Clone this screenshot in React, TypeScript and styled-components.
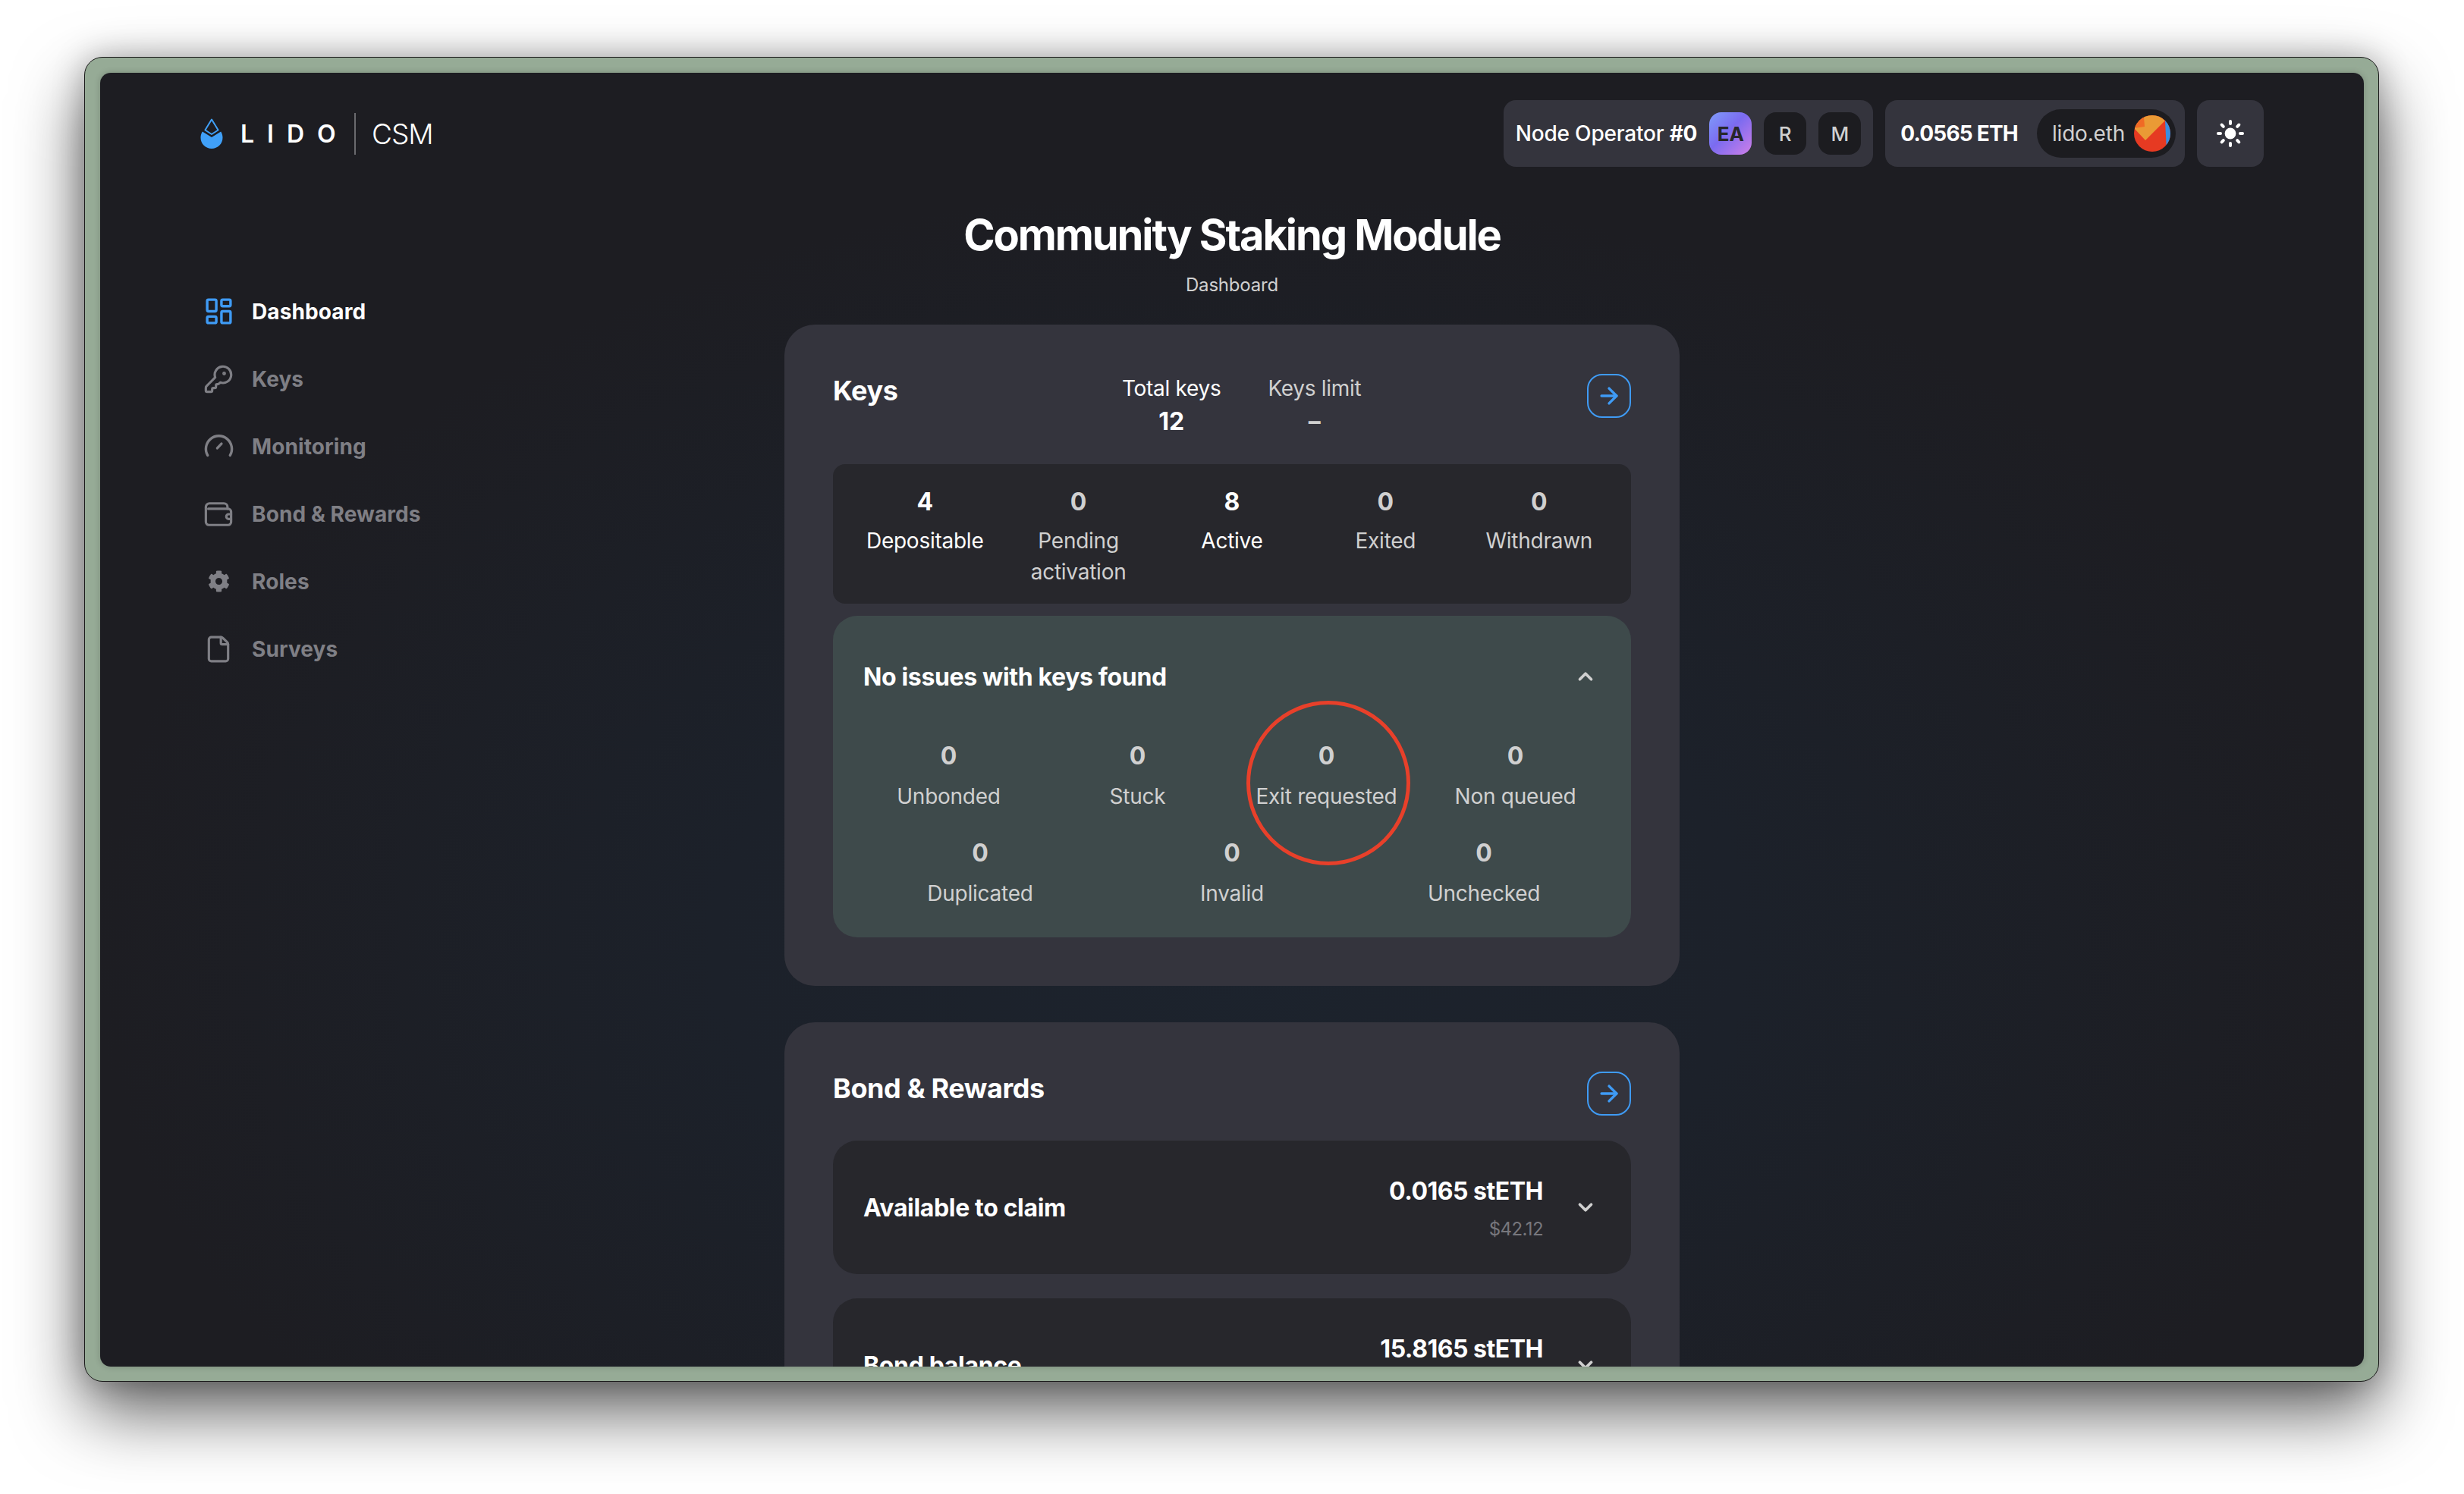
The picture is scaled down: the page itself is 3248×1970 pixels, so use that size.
import React from 'react';
import styled, { createGlobalStyle } from 'styled-components';
import { ArrowRight, ChevronDown, ChevronUp, File, KeyRound, LayoutDashboard } from 'lucide-react';
import { FaCog } from 'react-icons/fa';

const FONT = `Inter, 'Noto Sans', sans-serif`;

const NAV = ['Dashboard', 'Keys', 'Monitoring', 'Bond & Rewards', 'Roles', 'Surveys'];

const KEY_STATS = [
  { value: 4, label: 'Depositable', bright: true },
  { value: 0, label: 'Pending activation' },
  { value: 8, label: 'Active', bright: true },
  { value: 0, label: 'Exited' },
  { value: 0, label: 'Withdrawn' },
];

const ISSUES = [
  { label: 'Unbonded', span: 3 },
  { label: 'Stuck', span: 3 },
  { label: 'Exit requested', span: 3 },
  { label: 'Non queued', span: 3 },
  { label: 'Duplicated', span: 4 },
  { label: 'Invalid', span: 4 },
  { label: 'Unchecked', span: 4 },
];

function GaugeIcon() {
  return (
    <svg width="41" height="41" viewBox="0 0 24 24" fill="none" stroke="currentColor" strokeWidth="2" strokeLinecap="round">
      <path d="M3.34 19a10 10 0 1 1 17.32 0" />
      <path d="M10.8 13.4L14 10" />
    </svg>
  );
}

function WalletIcon() {
  return (
    <svg width="38" height="38" viewBox="0 0 24 24" fill="none" stroke="currentColor" strokeWidth="2" strokeLinejoin="round" strokeLinecap="round">
      <path d="M1.5 6a3 3 0 0 1 3-3h12a3 3 0 0 1 3 3v1.5" />
      <path d="M1.5 6v12.5A2.5 2.5 0 0 0 4 21h16a2.5 2.5 0 0 0 2.5-2.5V10A2.5 2.5 0 0 0 20 7.5H3.5" />
      <path d="M22.5 12h-2a2 2 0 0 0 0 4h2" />
    </svg>
  );
}

function SunIcon() {
  return (
    <svg width="40" height="40" viewBox="0 0 40 40" fill="#fff">
      <circle cx="20" cy="20" r="7.4" />
      {[0, 45, 90, 135, 180, 225, 270, 315].map((a) => (
        <rect key={a} x="18" y="2" width="4" height="7" rx="2" transform={`rotate(${a} 20 20)`} />
      ))}
    </svg>
  );
}

function DropLogo() {
  return (
    <svg width="30" height="41" viewBox="0 0 30 41">
      <path d="M15 1.5L23.6 15.5L15 21L6.4 15.5Z" fill="none" stroke="#40a0f8" strokeWidth="2" strokeLinejoin="round" />
      <path d="M2.8 17.5L15 25L27.2 17.5C28.6 19.7 29.5 22.4 29.5 25.5C29.5 33.6 23 40 15 40C7 40 0.5 33.6 0.5 25.5C0.5 22.4 1.4 19.7 2.8 17.5Z" fill="#40a0f8" />
    </svg>
  );
}

function EnsAvatar() {
  return (
    <svg width="48" height="48" viewBox="0 0 48 48">
      <defs>
        <clipPath id="avatar-round">
          <circle cx="24" cy="24" r="24" />
        </clipPath>
      </defs>
      <g clipPath="url(#avatar-round)">
        <rect width="48" height="48" fill="#e63a22" />
        <path d="M41 7L43 48H48V0H41Z" fill="#3a8ee0" />
        <path d="M0 17L15 33L41 7L30 -2H0Z" fill="#ea9a35" />
        <path d="M0 17L14 15L13 2L0 8Z" fill="#f06a25" />
      </g>
    </svg>
  );
}

function navIcon(name: string) {
  switch (name) {
    case 'Dashboard':
      return <LayoutDashboard size={41} strokeWidth={2} />;
    case 'Keys':
      return <KeyRound size={40} strokeWidth={1.9} />;
    case 'Monitoring':
      return <GaugeIcon />;
    case 'Bond & Rewards':
      return <WalletIcon />;
    case 'Roles':
      return <FaCog size={29} />;
    default:
      return <File size={38} strokeWidth={2} />;
  }
}

function LinkButton() {
  return (
    <ArrowLink>
      <ArrowRight size={34} strokeWidth={2.4} />
    </ArrowLink>
  );
}

function App() {
  return (
    <>
      <GlobalStyle />
      <Page>
        <Frame>
          <Screen>
            <Header>
              <Logo>
                <DropLogo />
                <LogoWord>LIDO</LogoWord>
                <LogoDivider />
                <LogoProduct>CSM</LogoProduct>
              </Logo>
              <HeaderRight>
                <HeaderPill>
                  <OperatorName>
                    Node Operator <b>#0</b>
                  </OperatorName>
                  <RoleChip $active>EA</RoleChip>
                  <RoleChip>R</RoleChip>
                  <RoleChip>M</RoleChip>
                </HeaderPill>
                <HeaderPill>
                  <Balance>0.0565 ETH</Balance>
                  <AddressPill>
                    <span>lido.eth</span>
                    <EnsAvatar />
                  </AddressPill>
                </HeaderPill>
                <ThemeButton>
                  <SunIcon />
                </ThemeButton>
              </HeaderRight>
            </Header>
            <Body>
              <Nav>
                {NAV.map((name, i) => (
                  <NavItem key={name} $active={i === 0}>
                    <NavIcon>{navIcon(name)}</NavIcon>
                    {name}
                  </NavItem>
                ))}
              </Nav>
              <Main>
                <Title>Community Staking Module</Title>
                <Subtitle>Dashboard</Subtitle>
                <Card>
                  <KeysHeader>
                    <CardTitle $basis="381px">Keys</CardTitle>
                    <TotalsGroup>
                      <Total>
                        <TotalLabel $bright>Total keys</TotalLabel>
                        <TotalValue>12</TotalValue>
                      </Total>
                      <Total>
                        <TotalLabel>Keys limit</TotalLabel>
                        <TotalValue $dim>–</TotalValue>
                      </Total>
                    </TotalsGroup>
                    <LinkButton />
                  </KeysHeader>
                  <StatsBox>
                    {KEY_STATS.map((s) => (
                      <StatItem key={s.label} $bright={s.bright}>
                        <StatValue>{s.value}</StatValue>
                        <StatLabel>{s.label}</StatLabel>
                      </StatItem>
                    ))}
                  </StatsBox>
                  <IssuesBox>
                    <IssuesHeader>
                      <RowTitle>No issues with keys found</RowTitle>
                      <Chevron>
                        <ChevronUp size={30} strokeWidth={3} />
                      </Chevron>
                    </IssuesHeader>
                    <IssuesGrid>
                      {ISSUES.map((s) => (
                        <IssueItem key={s.label} $span={s.span}>
                          <StatValue>0</StatValue>
                          <StatLabel>{s.label}</StatLabel>
                          {s.label === 'Exit requested' && <RedCircle />}
                        </IssueItem>
                      ))}
                    </IssuesGrid>
                  </IssuesBox>
                </Card>
                <BondCard>
                  <BondHeader>
                    <CardTitle>Bond &amp; Rewards</CardTitle>
                    <LinkButton />
                  </BondHeader>
                  <BondRow>
                    <RowTitle>Available to claim</RowTitle>
                    <Amount>
                      <AmountValue>0.0165 stETH</AmountValue>
                      <AmountFiat>$42.12</AmountFiat>
                    </Amount>
                    <Chevron>
                      <ChevronDown size={30} strokeWidth={3} />
                    </Chevron>
                  </BondRow>
                  <BondRow>
                    <RowTitle>Bond balance</RowTitle>
                    <Amount>
                      <AmountValue>15.8165 stETH</AmountValue>
                      <AmountFiat>$40 412.12</AmountFiat>
                    </Amount>
                    <Chevron>
                      <ChevronDown size={30} strokeWidth={3} />
                    </Chevron>
                  </BondRow>
                </BondCard>
              </Main>
            </Body>
          </Screen>
        </Frame>
      </Page>
    </>
  );
}

const GlobalStyle = createGlobalStyle`
  html, body {
    margin: 0;
    padding: 0;
    background: #fff;
  }
  * {
    box-sizing: border-box;
  }
`;

const Page = styled.div`
  width: 3248px;
  height: 1970px;
  padding: 75px 0 0 111px;
  background: #fff;
  overflow: hidden;
  font-family: ${FONT};
`;

const Frame = styled.div`
  width: 3025px;
  height: 1747px;
  padding: 20px;
  background: #96ab96;
  border: 1px solid #1a1a1a;
  border-radius: 24px;
  box-shadow: 0 40px 90px rgba(0, 0, 0, 0.62), 0 0 40px rgba(0, 0, 0, 0.25);
`;

const Screen = styled.div`
  width: 2984px;
  height: 1706px;
  overflow: hidden;
  border-radius: 14px;
  background: radial-gradient(ellipse 1500px 1000px at 1490px 1150px, #1c232d 0%, #1c212a 45%, #1d1d22 100%);
  box-shadow: 0 0 8px rgba(0, 0, 0, 0.2);
`;

const Header = styled.header`
  display: flex;
  align-items: center;
  justify-content: space-between;
  padding: 36px 132px 0;
`;

const Logo = styled.div`
  display: flex;
  align-items: center;
`;

const LogoWord = styled.span`
  margin-left: 23px;
  width: 150px;
  font-size: 32px;
  font-weight: 600;
  letter-spacing: 17px;
  color: #fff;
`;

const LogoDivider = styled.span`
  width: 2px;
  height: 55px;
  background: #6a6a6e;
`;

const LogoProduct = styled.span`
  margin-left: 21px;
  font-size: 37px;
  font-weight: 300;
  letter-spacing: -1px;
  color: #fff;
`;

const HeaderRight = styled.div`
  display: flex;
  gap: 16px;
`;

const HeaderPill = styled.div`
  display: flex;
  align-items: center;
  gap: 16px;
  height: 88px;
  padding: 0 16px;
  background: #34343d;
  border-radius: 16px;
`;

const OperatorName = styled.span`
  font-size: 28px;
  font-weight: 500;
  letter-spacing: -0.2px;
  color: #fff;
  white-space: nowrap;

  b {
    font-weight: 700;
  }
`;

const RoleChip = styled.span<{ $active?: boolean }>`
  display: flex;
  align-items: center;
  justify-content: center;
  width: 56px;
  height: 56px;
  border-radius: 16px;
  font-size: 26px;
  font-weight: ${(p) => (p.$active ? 700 : 500)};
  color: ${(p) => (p.$active ? '#27272c' : '#d0d0d0')};
  background: ${(p) => (p.$active ? 'linear-gradient(135deg, #7f9cf9 0%, #7b6bf0 45%, #cf7fe8 100%)' : '#1c1c20')};
`;

const Balance = styled.span`
  margin: 0 9px 0 4px;
  font-size: 28px;
  font-weight: 700;
  letter-spacing: -0.8px;
  color: #fff;
  white-space: nowrap;
`;

const AddressPill = styled.div`
  display: flex;
  align-items: center;
  gap: 12px;
  height: 64px;
  margin-right: -4px;
  padding: 0 7px 0 20px;
  border-radius: 32px;
  background: #1c1c20;
  font-size: 28px;
  font-weight: 400;
  letter-spacing: -0.2px;
  color: #d0d0d0;
`;

const ThemeButton = styled.div`
  display: flex;
  align-items: center;
  justify-content: center;
  width: 88px;
  height: 88px;
  border-radius: 16px;
  background: #34343d;
`;

const Body = styled.div`
  display: grid;
  grid-template-columns: 902px 1180px;
`;

const Nav = styled.nav`
  display: flex;
  flex-direction: column;
  padding: 146px 0 0 132px;
`;

const NavItem = styled.div<{ $active?: boolean }>`
  display: flex;
  align-items: center;
  height: 89px;
  font-size: 28px;
  font-weight: 700;
  letter-spacing: 0.1px;
  color: ${(p) => (p.$active ? '#fff' : '#7f7f85')};

  svg {
    color: ${(p) => (p.$active ? '#3f9bf5' : '#7f7f85')};
  }
`;

const NavIcon = styled.span`
  display: flex;
  align-items: center;
  justify-content: center;
  width: 48px;
  margin-right: 20px;
`;

const Main = styled.main`
  display: flex;
  flex-direction: column;
`;

const Title = styled.h1`
  margin: 54px 0 0;
  font-size: 56px;
  line-height: 72px;
  font-weight: 700;
  letter-spacing: -2.1px;
  text-align: center;
  color: #fff;
`;

const Subtitle = styled.div`
  margin-top: 12px;
  font-size: 24px;
  line-height: 36px;
  font-weight: 400;
  letter-spacing: -0.2px;
  text-align: center;
  color: #d0d0d0;
`;

const Card = styled.section`
  margin-top: 34px;
  height: 872px;
  padding: 62px 62px 0 64px;
  background: #34343d;
  border-radius: 40px;
`;

const BondCard = styled(Card)`
  margin-top: 48px;
  height: auto;
  padding-top: 62px;
`;

const KeysHeader = styled.div`
  display: flex;
  align-items: flex-start;
  height: 122px;
`;

const BondHeader = styled.div`
  display: flex;
  align-items: flex-start;
  justify-content: space-between;
  height: 94px;
`;

const CardTitle = styled.h2<{ $basis?: string }>`
  flex: ${(p) => (p.$basis ? `0 0 ${p.$basis}` : '0 1 auto')};
  margin: 0;
  font-size: 36px;
  line-height: 50px;
  font-weight: 700;
  letter-spacing: -0.4px;
  color: #fff;
`;

const TotalsGroup = styled.div`
  display: flex;
  gap: 62px;
`;

const Total = styled.div`
  display: flex;
  flex-direction: column;
  align-items: center;
`;

const TotalLabel = styled.span<{ $bright?: boolean }>`
  font-size: 28px;
  line-height: 44px;
  font-weight: 400;
  letter-spacing: -0.3px;
  color: ${(p) => (p.$bright ? '#fff' : '#d0d0d0')};
`;

const TotalValue = styled.span<{ $dim?: boolean }>`
  font-size: 32px;
  line-height: 44px;
  font-weight: 700;
  color: ${(p) => (p.$dim ? '#d0d0d0' : '#fff')};
`;

const ArrowLink = styled.span`
  display: flex;
  align-items: center;
  justify-content: center;
  flex: 0 0 58px;
  width: 58px;
  height: 58px;
  margin: 3px 2px 0 auto;
  border: 2px solid #3f9bf5;
  border-radius: 20px;
  color: #3f9bf5;
`;

const StatsBox = styled.div`
  display: grid;
  grid-template-columns: repeat(5, 1fr);
  width: 1052px;
  height: 184px;
  margin-top: 0;
  padding: 28px 20px 0;
  background: #27272c;
  border-radius: 16px;
`;

const StatItem = styled.div<{ $bright?: boolean }>`
  display: flex;
  flex-direction: column;
  align-items: center;
  padding: 0 20px;
  text-align: center;
  color: ${(p) => (p.$bright ? '#fff' : '#d0d0d0')};
`;

const StatValue = styled.div`
  font-size: 32px;
  line-height: 44px;
  font-weight: 700;
`;

const StatLabel = styled.div`
  margin-top: 9px;
  font-size: 28px;
  line-height: 41px;
  font-weight: 400;
  letter-spacing: -0.25px;
`;

const IssuesBox = styled.div`
  width: 1052px;
  height: 424px;
  margin-top: 16px;
  padding: 0 40px;
  background: #3e4a4b;
  border-radius: 32px;
`;

const IssuesHeader = styled.div`
  display: flex;
  align-items: center;
  justify-content: space-between;
  height: 160px;
  padding-top: 0;
`;

const RowTitle = styled.div`
  font-size: 32px;
  font-weight: 700;
  letter-spacing: -0.35px;
  color: #fff;
`;

const Chevron = styled.span`
  display: flex;
  align-items: center;
  justify-content: center;
  width: 40px;
  color: #d0d0d0;
`;

const IssuesGrid = styled.div`
  display: grid;
  grid-template-columns: repeat(12, 1fr);
  column-gap: 24px;
  row-gap: 32px;
  color: #d0d0d0;
  margin-top: 3px;
`;

const IssueItem = styled.div<{ $span: number }>`
  position: relative;
  grid-column: span ${(p) => p.$span};
  display: flex;
  flex-direction: column;
  align-items: center;

  ${StatLabel} {
    margin-top: 11px;
  }
`;

const RedCircle = styled.span`
  position: absolute;
  left: 50%;
  top: -51px;
  width: 216px;
  height: 217px;
  margin-left: -106px;
  border: 5px solid #e8402a;
  border-radius: 50%;
`;

const BondRow = styled.div`
  display: flex;
  align-items: center;
  width: 1052px;
  height: 176px;
  margin-bottom: 32px;
  padding: 0 40px;
  background: #27272c;
  border-radius: 32px;
`;

const Amount = styled.div`
  display: flex;
  flex-direction: column;
  align-items: flex-end;
  margin-left: auto;
  margin-right: 36px;
  padding-top: 4px;
`;

const AmountValue = styled.div`
  font-size: 32px;
  line-height: 44px;
  font-weight: 700;
  letter-spacing: -0.5px;
  color: #fff;
`;

const AmountFiat = styled.div`
  margin-top: 10px;
  font-size: 24px;
  line-height: 36px;
  letter-spacing: -0.6px;
  color: #77777d;
`;

export default App;
